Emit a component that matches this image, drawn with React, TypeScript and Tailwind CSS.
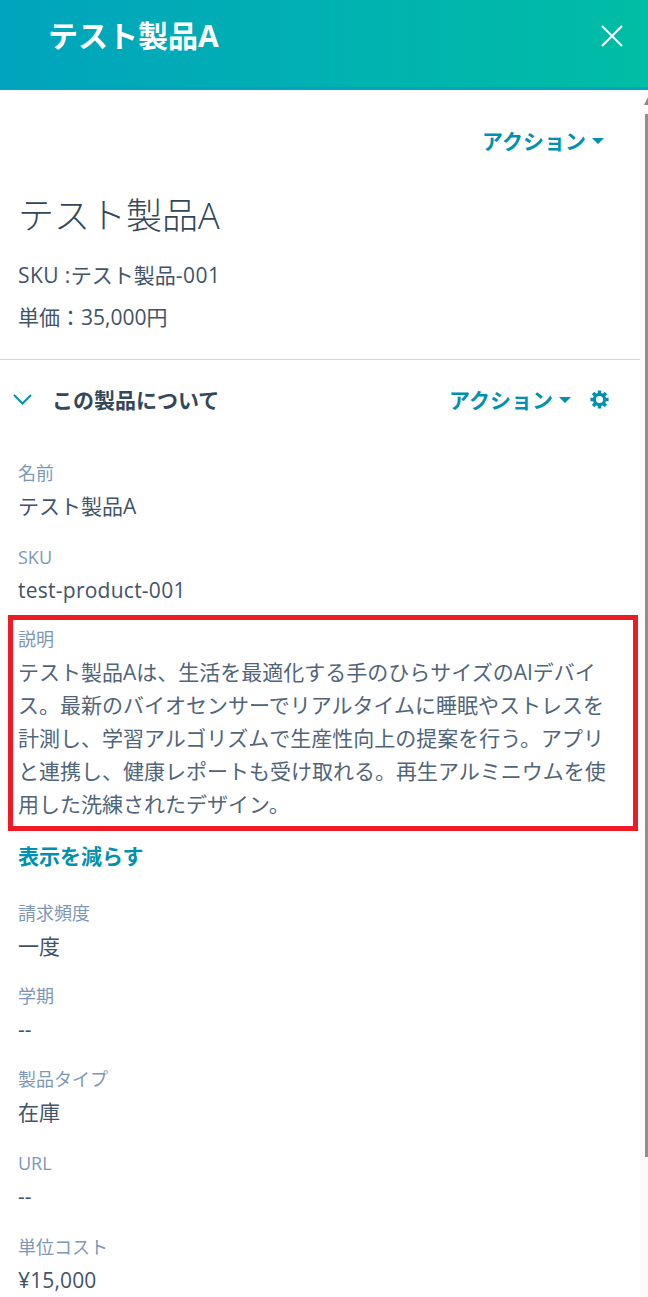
import React from 'react';

const FONT = "font-['Open_Sans','Noto_Sans_CJK_JP',sans-serif]";

const Caret = () => (
  <svg width="12" height="6" viewBox="0 0 12 6" className="ml-[6px]" fill="#0091ae">
    <path d="M0 0h12L6.6 5.6a.8.8 0 0 1-1.2 0z" />
  </svg>
);

const Gear = () => (
  <svg width="19" height="19" viewBox="0 0 24 24" fill="none" stroke="#0091ae" className="ml-[19px]">
    <circle cx="12" cy="12" r="6.5" strokeWidth="4" />
    <path
      d="M12 .5v4M12 19.5v4M.5 12h4M19.5 12h4M3.9 3.9l2.8 2.8M17.3 17.3l2.8 2.8M3.9 20.1l2.8-2.8M17.3 6.7l2.8-2.8"
      strokeWidth="4.4"
    />
  </svg>
);

const Field: React.FC<{ label: string; value: string; className?: string; valueClassName?: string }> = ({
  label,
  value,
  className,
  valueClassName,
}) => (
  <div className={className}>
    <div className="text-[18px] leading-[27px] text-[#7c98b6]">{label}</div>
    <div className={`mt-[3px] text-[21px] leading-[33px] text-[#3f5469] ${valueClassName ?? ''}`}>{value}</div>
  </div>
);

const App: React.FC = () => {
  return (
    <div className={`${FONT} h-[1297px] w-[648px] overflow-hidden bg-white`}>
      <header className="flex h-[90px] items-start justify-between border-b-[3px] border-[#00a4bd] bg-gradient-to-r from-[#00a4bd] to-[#00bda5] pl-[48px] pr-[25px]">
        <h1 className="mt-[13px] text-[30px] font-bold leading-[45px] text-white">テスト製品A</h1>
        <svg width="22" height="22" viewBox="0 0 22 22" className="mt-[25px]" stroke="#fff" strokeWidth="2" fill="none">
          <path d="M1 1l20 20M21 1L1 21" />
        </svg>
      </header>

      <div className="flex h-[1207px]">
        <main className="h-full w-[640px] overflow-hidden">
          <div className="flex justify-end pr-[36px] pt-[37px]">
            <button className="flex items-center text-[21px] font-bold leading-[28px] text-[#0091ae]">
              アクション
              <Caret />
            </button>
          </div>

          <section className="border-b border-[#cbd6e2] px-[18px] pb-[28px] pt-[34px]">
            <h2 className="text-[36px] font-light leading-[54px] text-[#33475b]">テスト製品A</h2>
            <p className="mt-[19px] text-[21px] leading-[27px] text-[#3f5469]">
              <span className="tracking-[0.4px]">SKU :</span>テスト製品<span className="tracking-[0.5px]">-001</span>
            </p>
            <p className="mt-[15px] text-[21px] leading-[27px] text-[#3f5469]">単価：35,000円</p>
          </section>

          <div className="flex h-[88px] items-center justify-between pb-[9px] pl-[13px] pr-[31px]">
            <div className="flex items-center">
              <svg width="19" height="11" viewBox="0 0 19 11" fill="none" stroke="#0091ae" strokeWidth="2">
                <path d="M1 1l8.5 8.5L18 1" />
              </svg>
              <h3 className="ml-[20px] text-[21px] font-bold leading-[28px] text-[#33475b]">この製品について</h3>
            </div>
            <div className="flex items-center">
              <button className="flex items-center text-[21px] font-bold leading-[28px] text-[#0091ae]">
                アクション
                <Caret />
              </button>
              <Gear />
            </div>
          </div>

          <div className="px-[18px]">
            <Field label="名前" value="テスト製品A" className="mt-[12px]" />
            <Field label="SKU" value="test-product-001" valueClassName="tracking-[0.25px]" className="mt-[21px]" />

            <div className="-ml-[10px] -mr-[16px] mt-[8px] border-[5px] border-[#ed1c24] pb-[5px] pl-[5px] pr-[17px] pt-[6px]">
              <div className="text-[18px] leading-[27px] text-[#7c98b6]">説明</div>
              <p className="mt-[3px] text-[21px] leading-[33px] text-[#50657a]">
                テスト製品Aは、生活を最適化する手のひらサイズのAIデバイス。最新のバイオセンサーでリアルタイムに睡眠やストレスを計測し、学習アルゴリズムで生産性向上の提案を行う。アプリと連携し、健康レポートも受け取れる。再生アルミニウムを使用した洗練されたデザイン。
              </p>
            </div>

            <button className="mt-[11px] block text-[21px] font-bold leading-[28px] text-[#0091ae]">表示を減らす</button>

            <Field label="請求頻度" value="一度" className="mt-[30px]" />
            <Field label="学期" value="--" className="mt-[20px]" />
            <Field label="製品タイプ" value="在庫" className="mt-[20px]" />
            <Field label="URL" value="--" className="mt-[21px]" />
            <Field label="単位コスト" value="¥15,000" valueClassName="tracking-[0.15px]" className="mt-[21px]" />
          </div>
        </main>

        <div className="flex w-[8px] flex-col items-end bg-[#fbfbfb]">
          <svg width="4" height="8" viewBox="0 0 4 8" className="mt-[7px]" fill="#8a8a8a">
            <path d="M4 0v8H0z" />
          </svg>
          <div className="mt-[9px] h-[1043px] w-[3px] bg-[#8f8f8f]" />
        </div>
      </div>
    </div>
  );
};

export default App;
